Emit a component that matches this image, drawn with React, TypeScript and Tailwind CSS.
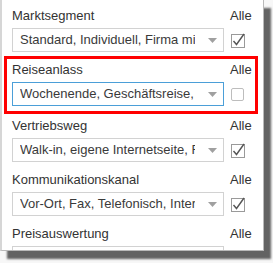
import React from 'react';

type Filter = {
  label: string;
  value: string;
  checked: boolean;
};

const filters: Filter[] = [
  { label: 'Marktsegment', value: 'Standard, Individuell, Firma mit Vertrag', checked: true },
  { label: 'Reiseanlass', value: 'Wochenende, Geschäftsreise, Urlaub', checked: false },
  { label: 'Vertriebsweg', value: 'Walk-in, eigene Internetseite, Fax', checked: true },
  { label: 'Kommunikationskanal', value: 'Vor-Ort, Fax, Telefonisch, Internet', checked: true },
  { label: 'Preisauswertung', value: 'Alle Preise', checked: true },
];

function Caret() {
  return (
    <svg width="9" height="5" viewBox="0 0 9 5" className="shrink-0">
      <path d="M0 0 H9 L4.5 5 Z" fill="#a0a0a0" />
    </svg>
  );
}

function CheckBox({ checked }: { checked: boolean }) {
  if (!checked) {
    return <div className="w-[13px] h-[13px] rounded-[2px] border border-[#bdbdbd] bg-white" />;
  }
  return (
    <svg width="15" height="15" viewBox="0 0 15 15">
      <rect x="0.5" y="1.5" width="13" height="13" fill="#fff" stroke="#9a9a9a" />
      <path d="M2.5 8 L5.5 11.5 L13 1" fill="none" stroke="#555" strokeWidth="1.4" />
    </svg>
  );
}

function FilterRow({ filter, active }: { filter: Filter; active?: boolean }) {
  return (
    <div>
      <div className="grid grid-cols-[212px_1fr] gap-x-[6px] h-[15px] leading-[15px]">
        <span>{filter.label}</span>
        <span>Alle</span>
      </div>
      <div className="grid grid-cols-[212px_1fr] gap-x-[7px] mt-[5px] items-center">
        <div
          className={`h-[24px] flex items-center bg-white border pl-[7px] pr-[6px] ${
            active ? 'border-[#4b9fd8]' : 'border-[#d2d2d2]'
          }`}
        >
          <span className="w-[175px] overflow-hidden whitespace-nowrap text-[#3a3a3a]">{filter.value}</span>
          <div className="flex-1 flex justify-end">
            <Caret />
          </div>
        </div>
        <div className="flex items-center">
          <CheckBox checked={filter.checked} />
        </div>
      </div>
    </div>
  );
}

export default function App() {
  return (
    <div className="w-[273px] h-[263px] bg-[#f7f7f7] overflow-hidden font-['Liberation_Sans',Arial,sans-serif] text-[13px] text-[#333]">
      <div className="w-[264px] h-[251px] bg-white border-l-2 border-l-[#d6d6d6] border-r border-b border-[#b9b9b9] shadow-[7px_8px_2px_rgba(0,0,0,0.6)] overflow-hidden">
        <div className="pl-[10px] pt-[8px]">
          <FilterRow filter={filters[0]} />
        </div>

        {/* highlighted row */}
        <div className="mt-[4px] ml-[2px] w-[254px] border-[3px] border-[#ff0000] pl-[5px] pt-[3px] pb-[5px]">
          <FilterRow filter={filters[1]} active />
        </div>

        <div className="pl-[10px] pt-[4px]">
          <FilterRow filter={filters[2]} />
        </div>
        <div className="pl-[10px] pt-[10px]">
          <FilterRow filter={filters[3]} />
        </div>
        <div className="pl-[10px] pt-[10px]">
          <FilterRow filter={filters[4]} />
        </div>
      </div>
    </div>
  );
}
